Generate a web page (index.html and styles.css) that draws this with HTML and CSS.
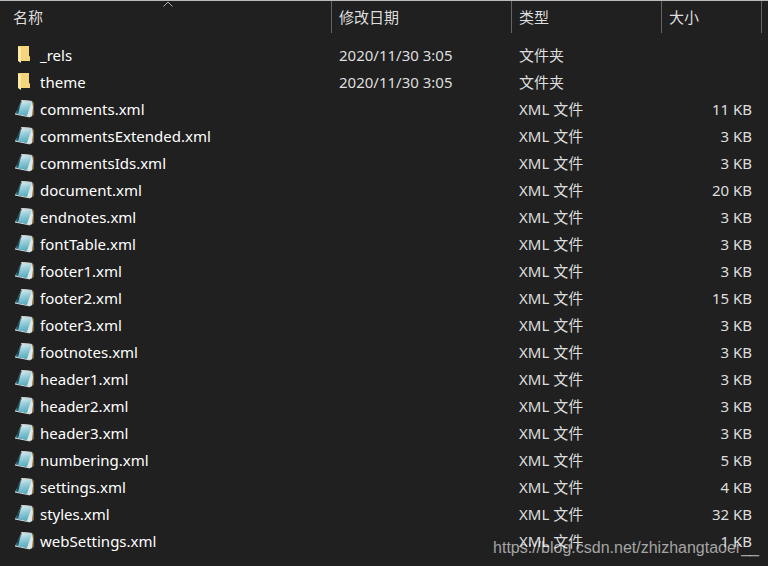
FILE: index.html
```html
<!DOCTYPE html>
<html lang="zh-CN">
<head>
    <meta charset="UTF-8">
    <meta name="viewport" content="width=device-width, initial-scale=1.0">
    <title>word</title>
    <link rel="stylesheet" href="styles.css">
</head>
<body>
    <svg class="icon-defs" aria-hidden="true">
        <defs>
            <linearGradient id="pageFill" x1="0.3" y1="0" x2="0.5" y2="1">
                <stop offset="0" stop-color="#e3eff0"/>
                <stop offset="0.45" stop-color="#92cbd8"/>
                <stop offset="1" stop-color="#4aa6bb"/>
            </linearGradient>
            <linearGradient id="sideFill" x1="1" y1="0" x2="0" y2="1">
                <stop offset="0" stop-color="#5a7f86"/>
                <stop offset="0.6" stop-color="#17424f"/>
                <stop offset="1" stop-color="#6fa9b4"/>
            </linearGradient>
            <symbol id="folder" viewBox="0 0 20 20">
                <path d="M3 1H14V11L15 12V16H3z" fill="#e9c15c"/>
                <path d="M5 1H14V11L15 12V16H5z" fill="#f5d57c"/>
                <path d="M3 1L6 3V18L3 16z" fill="#ffe9a6"/>
            </symbol>
            <symbol id="note" viewBox="0 0 20 20">
                <path d="M17 2L19 4V16L16 18z" fill="#7c6236"/>
                <path d="M6 2L0 15L6 16z" fill="url(#sideFill)"/>
                <path d="M7 1L17 2L16 18L3 15z" fill="url(#pageFill)"/>
                <path d="M17 2L18 8L17 17L15 18L12 17z" fill="#dfe8e8"/>
                <path d="M6 1.5L17 2.5" stroke="#c9cdcd" fill="none"/>
                <path d="M0 15L15 18" stroke="#cfe2e5" fill="none"/>
            </symbol>
        </defs>
    </svg>

    <table class="file-list">
        <colgroup>
            <col>
            <col class="col-date">
            <col class="col-type">
            <col class="col-size">
            <col class="col-end">
        </colgroup>
        <thead>
            <tr>
                <th aria-sort="ascending">
                    <button type="button" class="sort-btn">名称</button>
                    <svg class="sort-arrow" viewBox="0 0 10 6" aria-hidden="true"><path d="M0.5 5.5L5 1L9.5 5.5" fill="none" stroke="#b0b0b0"/></svg>
                </th>
                <th><button type="button" class="sort-btn">修改日期</button></th>
                <th><button type="button" class="sort-btn">类型</button></th>
                <th><button type="button" class="sort-btn">大小</button></th>
                <td></td>
            </tr>
        </thead>
        <tbody id="files"></tbody>
    </table>
    <div class="watermark">https://blog.csdn.net/zhizhangtaoer__</div>

    <script>
        const files = [
            ['_rels', '2020/11/30 3:05', '文件夹', ''],
            ['theme', '2020/11/30 3:05', '文件夹', ''],
            ['comments.xml', '', 'XML 文件', '11 KB'],
            ['commentsExtended.xml', '', 'XML 文件', '3 KB'],
            ['commentsIds.xml', '', 'XML 文件', '3 KB'],
            ['document.xml', '', 'XML 文件', '20 KB'],
            ['endnotes.xml', '', 'XML 文件', '3 KB'],
            ['fontTable.xml', '', 'XML 文件', '3 KB'],
            ['footer1.xml', '', 'XML 文件', '3 KB'],
            ['footer2.xml', '', 'XML 文件', '15 KB'],
            ['footer3.xml', '', 'XML 文件', '3 KB'],
            ['footnotes.xml', '', 'XML 文件', '3 KB'],
            ['header1.xml', '', 'XML 文件', '3 KB'],
            ['header2.xml', '', 'XML 文件', '3 KB'],
            ['header3.xml', '', 'XML 文件', '3 KB'],
            ['numbering.xml', '', 'XML 文件', '5 KB'],
            ['settings.xml', '', 'XML 文件', '4 KB'],
            ['styles.xml', '', 'XML 文件', '32 KB'],
            ['webSettings.xml', '', 'XML 文件', '1 KB']
        ];

        document.getElementById('files').innerHTML = files.map(([name, date, type, size]) => `
            <tr>
                <td class="name"><div class="file"><svg class="icon" aria-hidden="true"><use href="#${type === '文件夹' ? 'folder' : 'note'}"/></svg>${name}</div></td>
                <td>${date}</td>
                <td>${type}</td>
                <td class="size">${size}</td>
                <td></td>
            </tr>`).join('');
    </script>
</body>
</html>
```

FILE: styles.css
```css
body {
    margin: 0;
    background-color: #202020;
    color: #dedede;
    font-family: "Noto Sans", "Noto Sans CJK SC", sans-serif;
    font-size: 15px;
    border-top: 1px solid #b9bdb9;
}
.icon-defs {
    position: absolute;
    width: 0;
    height: 0;
}
.file-list {
    width: 100%;
    table-layout: fixed;
    border-collapse: separate;
    border-spacing: 0;
}
.col-date {
    width: 180px;
}
.col-type {
    width: 150px;
}
.col-size {
    width: 100px;
}
.col-end {
    width: 6px;
}
.file-list th {
    position: relative;
    height: 32px;
    padding: 0;
    border-right: 1px solid #636363;
    font-weight: normal;
    text-align: left;
}
.sort-btn {
    display: block;
    width: 100%;
    height: 32px;
    padding: 0 7px;
    border: none;
    background: none;
    color: inherit;
    font: inherit;
    line-height: 32px;
    text-align: left;
}
th:first-child .sort-btn {
    padding-left: 13px;
}
.sort-arrow {
    position: absolute;
    top: 0;
    left: calc(50% - 3px);
    width: 10px;
    height: 6px;
}
.file-list tbody::before {
    content: "";
    display: block;
    height: 9px;
}
.file-list td {
    padding: 0 7px;
    line-height: 27px;
    white-space: nowrap;
}
.file-list thead td,
.file-list td:last-child {
    padding: 0;
}
.file-list tbody td {
    height: 27px;
}
.file-list .name {
    padding-left: 15px;
    color: #ffffff;
}
.file {
    display: flex;
    height: 27px;
    gap: 5px;
}
.icon {
    width: 20px;
    height: 20px;
    margin-top: 3px;
}
.file-list .size {
    padding-right: 10px;
    text-align: right;
}
.watermark {
    position: absolute;
    right: 9px;
    bottom: 9px;
    color: rgba(255, 255, 255, 0.6);
    font-family: "Liberation Sans", Arial, sans-serif;
    font-size: 16px;
    line-height: 18px;
}
```
